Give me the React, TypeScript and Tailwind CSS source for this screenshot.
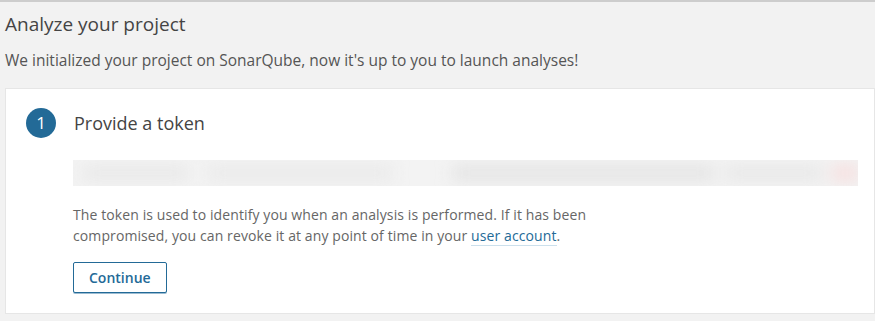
import React from "react";

const TokenBar = () => (
  <div className="relative mt-[22px] h-[26px] w-[785px] overflow-hidden bg-[#f3f3f3]">
    <div className="absolute inset-0 flex items-center blur-[8px]">
      <div className="ml-[10px] h-[12px] w-[120px] bg-[#e6e6e6]" />
      <div className="ml-[20px] h-[14px] w-[210px] bg-[#e9e9e9]" />
      <div className="ml-[60px] h-[14px] w-[300px] bg-[#e3e3e3]" />
      <div className="ml-[10px] h-[14px] w-[110px] bg-[#e7e7e7]" />
      <div className="ml-[10px] h-[16px] w-[30px] bg-[#f6dede]" />
    </div>
  </div>
);

const Step = () => (
  <div className="ml-[5px] mt-[18px] border border-[#e6e6e6] bg-white pb-[20px] pt-[19px]">
    <div className="flex items-center">
      <div className="ml-[20px] flex h-[30px] w-[30px] items-center justify-center rounded-full bg-[#236a97] text-[17px] text-white">
        1
      </div>
      <h2 className="ml-[18px] text-[18px] text-[#444]">Provide a token</h2>
    </div>
    <div className="ml-[67px]">
      <TokenBar />
      <p className="mt-[18px] text-[14px] leading-[21px] tracking-[0.1px] text-[#666]">
        The token is used to identify you when an analysis is performed. If it has been
        <br />
        compromised, you can revoke it at any point of time in your{" "}
        <a className="border-b border-[#cce0ec] text-[#236a97]" href="#">
          user account
        </a>
        .
      </p>
      <button className="mt-[16px] h-[31px] rounded-[2px] border border-[#236a97] bg-white px-[15px] text-[14px] font-semibold text-[#236a97] shadow-[0_1px_0_#9bbcd2]">
        Continue
      </button>
    </div>
  </div>
);

export default function App() {
  return (
    <div className="h-[321px] w-[875px] overflow-hidden border-t-2 border-[#cdcdcd] bg-[#f2f2f2] font-['Open_Sans',sans-serif]">
      <header className="px-[5px] pt-[8px]">
        <h1 className="text-[19px] leading-[28px] text-[#444]">Analyze your project</h1>
        <p className="mt-[12px] text-[15.5px] leading-[20px] text-[#555]">
          We initialized your project on SonarQube, now it's up to you to launch analyses!
        </p>
      </header>
      <Step />
    </div>
  );
}
